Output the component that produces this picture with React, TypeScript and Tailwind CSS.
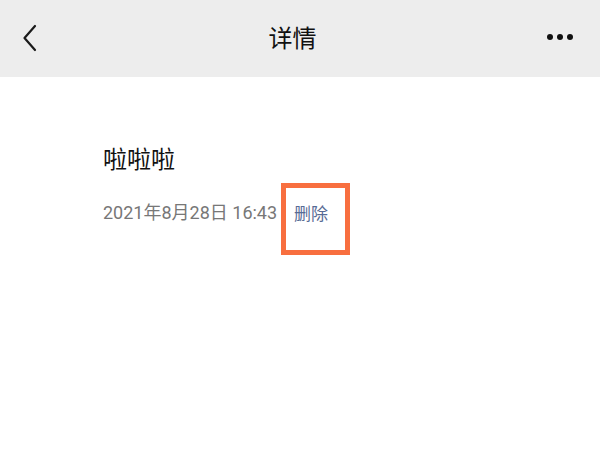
import React from "react";

export default function App() {
  return (
    <div
      className="relative w-[600px] h-[450px] bg-white overflow-hidden"
      style={{ fontFamily: '"Noto Sans CJK SC", "Noto Sans", sans-serif' }}
    >
      <div className="h-[77px] bg-[#ededed] flex items-center justify-between px-[22px]">
        <svg width="16" height="28" viewBox="0 0 16 28" className="mt-[-1px]">
          <path d="M13 2 L2.5 14 L13 26" fill="none" stroke="#1a1a1a" strokeWidth="2.2" strokeLinecap="round" strokeLinejoin="round" />
        </svg>
        <div className="text-[24px] leading-none text-[#111] mt-[-4px]">详情</div>
        <div className="flex gap-[4px] items-center mr-[5px] mt-[-4px]">
          <span className="w-[6px] h-[6px] rounded-full bg-[#111]" />
          <span className="w-[6px] h-[6px] rounded-full bg-[#111]" />
          <span className="w-[6px] h-[6px] rounded-full bg-[#111]" />
        </div>
      </div>
      <div className="pl-[103px] pt-[67px]">
        <div className="text-[24px] leading-[28px] text-[#111]">啦啦啦</div>
        <div className="flex items-center mt-[29px] text-[18px] leading-[24px]">
          <span
            className="text-[#777777]"
            style={{ fontFamily: 'Roboto, "Noto Sans CJK SC", sans-serif' }}
          >
            2021年8月28日 16:43
          </span>
          <span className="text-[#576b95] ml-[17px] text-[17px]">删除</span>
        </div>
      </div>
      <div className="absolute left-[281px] top-[183px] w-[69px] h-[72px] border-[5px] border-[#f86f3f]" />
    </div>
  );
}
